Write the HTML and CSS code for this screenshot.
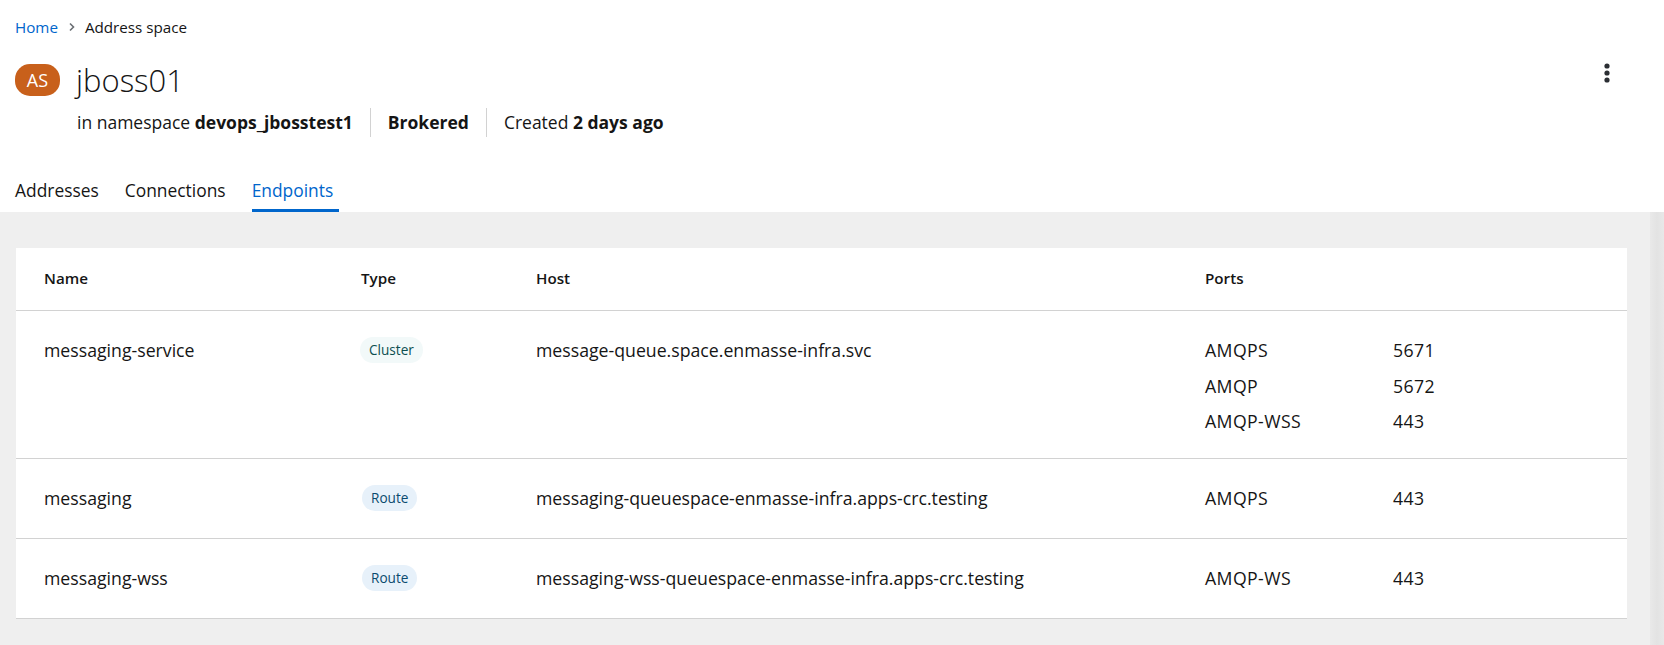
FILE: index.html
```html
<!DOCTYPE html>
<html>
<head>
<meta charset="utf-8">
<link rel="stylesheet" href="styles.css">
</head>
<body>
<header class="page-header">
  <nav class="breadcrumb">
    <a class="crumb-link" href="#">Home</a>
    <svg class="crumb-sep" width="8" height="10" viewBox="0 0 8 10"><path d="M2 1.5 L5.5 5 L2 8.5" fill="none" stroke="#6a6e73" stroke-width="1.6"/></svg>
    <span class="crumb-current">Address space</span>
  </nav>
  <div class="title-row">
    <span class="badge">AS</span>
    <h1 class="title">jboss01</h1>
    <button class="kebab" aria-label="Actions">
      <svg width="6" height="20" viewBox="0 0 6 20"><circle cx="3" cy="3" r="2.6" fill="#2b2e33"/><circle cx="3" cy="10" r="2.6" fill="#2b2e33"/><circle cx="3" cy="17" r="2.6" fill="#2b2e33"/></svg>
    </button>
  </div>
  <div class="meta">
    <span class="meta-item first">in namespace <b>devops_jbosstest1</b></span>
    <span class="meta-item"><b>Brokered</b></span>
    <span class="meta-item last">Created <b>2 days ago</b></span>
  </div>
  <div class="tabs">
    <span class="tab">Addresses</span>
    <span class="tab">Connections</span>
    <span class="tab active">Endpoints</span>
  </div>
</header>
<main class="content">
  <section class="card">
    <div class="row head">
      <div class="cell">Name</div>
      <div class="cell">Type</div>
      <div class="cell">Host</div>
      <div class="cell">Ports</div>
    </div>
    <div class="row">
      <div class="cell">messaging-service</div>
      <div class="cell type"><span class="tag cluster">Cluster</span></div>
      <div class="cell">message-queue.space.enmasse-infra.svc</div>
      <div class="cell ports">
        <span>AMQPS</span><span>5671</span>
        <span>AMQP</span><span>5672</span>
        <span>AMQP-WSS</span><span>443</span>
      </div>
    </div>
    <div class="row">
      <div class="cell">messaging</div>
      <div class="cell type"><span class="tag route">Route</span></div>
      <div class="cell">messaging-queuespace-enmasse-infra.apps-crc.testing</div>
      <div class="cell ports">
        <span>AMQPS</span><span>443</span>
      </div>
    </div>
    <div class="row">
      <div class="cell">messaging-wss</div>
      <div class="cell type"><span class="tag route">Route</span></div>
      <div class="cell">messaging-wss-queuespace-enmasse-infra.apps-crc.testing</div>
      <div class="cell ports">
        <span>AMQP-WS</span><span>443</span>
      </div>
    </div>
  </section>
</main>
</body>
</html>
```

FILE: styles.css
```css
* { box-sizing: border-box; }
html, body { margin: 0; padding: 0; }
body {
  font-family: "Open Sans", "Noto Sans", sans-serif;
  color: #151515;
  background: #ffffff;
  width: 1664px;
  height: 645px;
  overflow: hidden;
  display: flex;
  flex-direction: column;
}
.page-header {
  background: #fff;
  padding: 16px 0 0 15px;
}
.breadcrumb {
  display: flex;
  align-items: center;
  height: 22px;
  font-size: 15.2px;
  line-height: 22px;
}
.crumb-link { color: #0066cc; text-decoration: none; }
.crumb-sep { margin: 0 9px 0 10px; }
.crumb-current { color: #151515; }

.title-row {
  display: flex;
  align-items: center;
  height: 32px;
  margin-top: 26px;
  padding-right: 54px;
}
.badge {
  width: 45px;
  height: 32px;
  border-radius: 15px;
  background: #c8601b;
  color: #fff;
  font-size: 18px;
  display: inline-flex;
  align-items: center;
  justify-content: center;
  margin-right: 16px;
}
.title {
  margin: 0;
  font-size: 31px;
  font-weight: 300;
  line-height: 32px;
  flex: 1;
}
.kebab {
  border: 0;
  background: none;
  padding: 0;
  width: 6px;
  height: 20px;
  margin-top: -14px;
  display: flex;
}
.meta {
  display: flex;
  margin-top: 12px;
  padding-left: 62px;
  font-size: 17.5px;
  height: 29px;
  line-height: 29px;
}
.meta-item {
  padding: 0 17px;
  border-left: 1px solid #d2d2d2;
}
.meta-item.first { padding-left: 0; border-left: 0; }
.meta b { font-weight: 700; }

.tabs {
  display: flex;
  gap: 20px;
  margin-top: 41px;
  font-size: 17.4px;
}
.tab {
  position: relative;
  line-height: 24px;
  padding: 0 6px 10px 0;
}
.tab.active { color: #0066cc; }
.tab.active::after {
  content: "";
  position: absolute;
  left: 0; right: 0; bottom: 0;
  height: 3px;
  background: #0066cc;
}

.content {
  flex: 1;
  background: linear-gradient(to right, #efefef 0, #efefef 1650px, #e9e9e9 1650px, #e3e3e3 1657px, #e8e8e8 1664px);
  padding: 36px 37px 0 16px;
}
.card {
  background: #fff;
}
.row {
  display: grid;
  grid-template-columns: 317px 175px 669px 1fr;
  padding-left: 28px;
  border-bottom: 1px solid #d2d2d2;
  font-size: 17.7px;
  line-height: 24px;
}
.row .cell { padding: 27px 0 28px; }
.row.head { font-size: 15.2px; font-weight: 600; }
.row.head .cell { padding: 19px 0 20px; line-height: 23px; }
.ports {
  display: grid;
  grid-template-columns: 188px auto;
  row-gap: 11.5px;
  align-content: start;
  letter-spacing: 0.4px;
}
.row .cell.ports { padding-bottom: 25px; }
.row .cell.type { display: flex; align-items: flex-start; }
.tag {
  display: inline-flex;
  align-items: center;
  height: 26px;
  margin: -1px 0 -1px -1px;
  padding: 0 9px;
  border-radius: 13px;
  font-size: 13.6px;
  line-height: 26px;
}
.tag.cluster { background: #f2f9f9; color: #0d4f50; }
.tag.route { background: #e7f1fa; color: #0b4a6e; margin-left: 1px; }
```
